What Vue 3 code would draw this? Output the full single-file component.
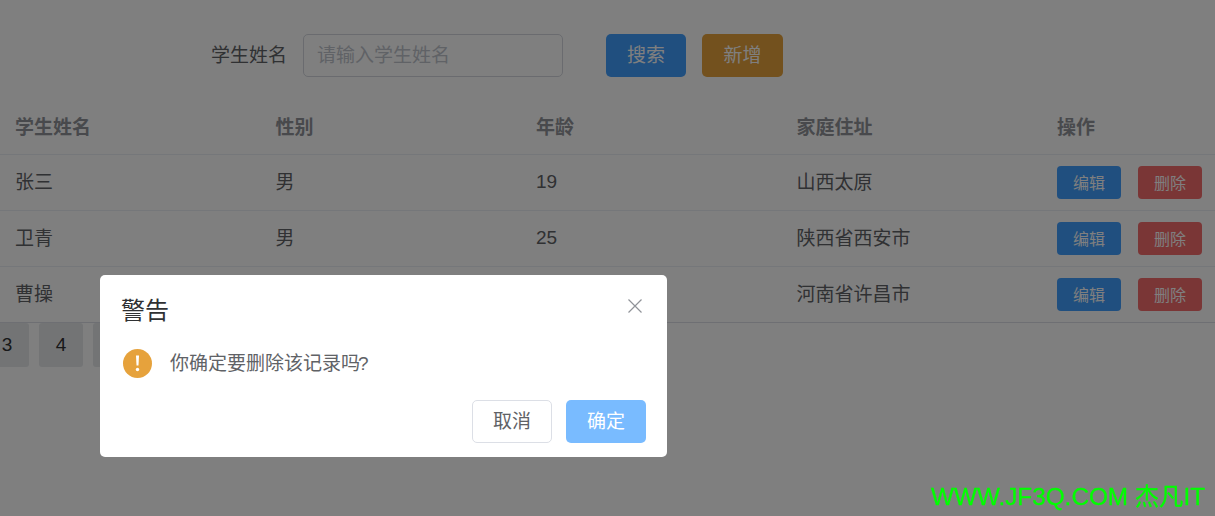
<script setup>
const rows = [
  { name: '张三', sex: '男', age: 19, addr: '山西太原' },
  { name: '卫青', sex: '男', age: 25, addr: '陕西省西安市' },
  { name: '曹操', sex: '男', age: 40, addr: '河南省许昌市' }
]
const pages = [3, 4, 5]
</script>

<template>
  <div class="page">
    <form class="search" @submit.prevent>
      <label class="label">学生姓名</label>
      <input class="input" placeholder="请输入学生姓名" />
      <button class="btn primary first" type="button">搜索</button>
      <button class="btn warning" type="button">新增</button>
    </form>

    <table class="table">
      <colgroup>
        <col class="c" /><col class="c" /><col class="c" /><col class="c" /><col />
      </colgroup>
      <thead>
        <tr>
          <th>学生姓名</th><th>性别</th><th>年龄</th><th>家庭住址</th><th>操作</th>
        </tr>
      </thead>
      <tbody>
        <tr v-for="r in rows" :key="r.name">
          <td class="zh">{{ r.name }}</td>
          <td class="zh">{{ r.sex }}</td>
          <td>{{ r.age }}</td>
          <td class="zh">{{ r.addr }}</td>
          <td class="ops">
            <button class="mini primary" type="button">编辑</button>
            <button class="mini danger" type="button">删除</button>
          </td>
        </tr>
      </tbody>
    </table>

    <div class="pager">
      <span v-for="p in pages" :key="p" class="pg">{{ p }}</span>
    </div>

    <div class="mask"></div>

    <div class="dialog">
      <div class="head">
        <span class="title">警告</span>
        <svg class="close" viewBox="0 0 14 14" width="14" height="14">
          <path d="M0.5 0.5L13.5 13.5M13.5 0.5L0.5 13.5" stroke="#909399" stroke-width="1.2" fill="none" />
        </svg>
      </div>
      <div class="body">
        <svg class="warn" viewBox="0 0 29 29" width="29" height="29">
          <circle cx="14.5" cy="14.5" r="14.5" fill="#e6a23c" />
          <path d="M13 6.5h3l-.5 10h-2z" fill="#fff" />
          <circle cx="14.5" cy="20.5" r="1.7" fill="#fff" />
        </svg>
        <span class="msg">你确定要删除该记录吗<span class="q">?</span></span>
      </div>
      <div class="foot">
        <button class="btn plain" type="button">取消</button>
        <button class="btn light" type="button">确定</button>
      </div>
    </div>

    <div class="mark">WWW.JF3Q.COM 杰凡IT</div>
  </div>
</template>

<style>
html, body { margin: 0; overflow: hidden; background: #fff; }
</style>

<style scoped>
.page {
  width: 1215px;
  height: 516px;
  overflow: hidden;
  font-family: "Liberation Sans", "Noto Sans CJK SC", sans-serif;
  font-size: 19px;
  color: #606266;
}
.search {
  display: flex;
  align-items: center;
  padding: 34px 0 0 211px;
  height: 43px;
}
.label { width: 92px; flex: none; color: #606266; padding-bottom: 4px; }
.input {
  box-sizing: border-box;
  width: 260px;
  height: 43px;
  padding: 0 14px 0 13px;
  border: 1px solid #d4d7de;
  border-radius: 5px;
  font: inherit;
  outline: none;
  background: #fff;
}
.input::placeholder { color: #c0c4cc; opacity: 1; }
.btn {
  box-sizing: border-box;
  width: 80px;
  height: 43px;
  padding: 0 0 4px;
  border: 0;
  border-radius: 5px;
  font: inherit;
  color: #fff;
}
.first { margin-left: 43px; margin-right: 16px; }
.primary { background: #409eff; color: #fff; }
.warning { background: #e6a23c; width: 81px; }
.table {
  width: 1215px;
  margin-top: 23px;
  border-collapse: collapse;
  table-layout: fixed;
}
.c { width: 260.5px; }
th, td {
  padding: 0 15px;
  text-align: left;
  border-bottom: 1px solid #ebeef5;
  box-sizing: border-box;
}
th { height: 54px; color: #909399; font-weight: 700; padding-bottom: 3px; }
td { height: 56px; color: #606266; }
td.zh { padding-bottom: 4px; }
tbody tr:last-child td { border-bottom-color: #dcdfe6; }
.ops { white-space: nowrap; }
.mini {
  box-sizing: border-box;
  width: 64px;
  height: 33px;
  padding: 0;
  border: 0;
  border-radius: 4px;
  font: inherit;
  font-size: 16px;
  color: #fff;
  vertical-align: middle;
}
.mini + .mini { margin-left: 17px; }
.danger { background: #f56c6c; }
.pager {
  display: flex;
  gap: 10px;
  margin-left: -15px;
}
.pg {
  width: 44px;
  height: 44px;
  display: flex;
  align-items: center;
  justify-content: center;
  background: #e6e8eb;
  border-radius: 3px;
  color: #303133;
}
.mask {
  position: fixed;
  inset: 0;
  background: rgba(0, 0, 0, 0.5);
}
.dialog {
  position: fixed;
  left: 100px;
  top: 275px;
  box-sizing: border-box;
  width: 567px;
  height: 182px;
  padding: 0 21px;
  background: #fff;
  border-radius: 5px;
}
.head {
  display: flex;
  align-items: center;
  justify-content: space-between;
  height: 68px;
  font-size: 24px;
  color: #303133;
}
.title { padding-bottom: 2px; }
.close { margin-right: 4px; margin-top: -7px; }
.body {
  display: flex;
  align-items: center;
  gap: 18px;
  height: 40px;
  padding-left: 2px;
}
.warn { flex: none; }
.msg { padding-bottom: 4px; }
.q { margin-left: -2px; }
.foot {
  display: flex;
  justify-content: flex-end;
  gap: 14px;
  margin-top: 17px;
}
.plain { background: #fff; border: 1px solid #dcdfe6; color: #606266; }
.light { background: #79bbff; }
.mark {
  position: fixed;
  right: 10px;
  bottom: 5px;
  font-size: 24.3px;
  line-height: 28px;
  color: #00ff00;
  -webkit-text-stroke: 0.3px #00ff00;
}
</style>
